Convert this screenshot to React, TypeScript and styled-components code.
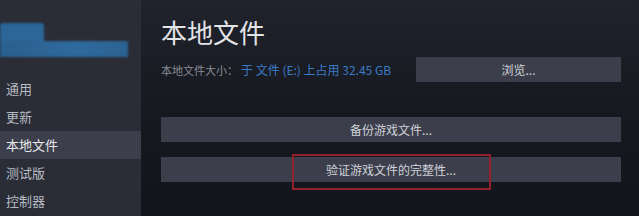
import React from "react";
import styled, { createGlobalStyle } from "styled-components";

const Global = createGlobalStyle`
  html, body { margin: 0; padding: 0; background: #1a1d24; }
  body { font-family: "Noto Sans CJK SC", "Noto Sans", sans-serif; }
`;

const Page = styled.div`
  display: flex;
  width: 639px;
  height: 216px;
  overflow: hidden;
`;

const Sidebar = styled.nav`
  width: 141px;
  flex-shrink: 0;
  background: #2a2d36;
  display: flex;
  flex-direction: column;
  padding-top: 23px;
  box-sizing: border-box;
`;

const Avatar = styled.div`
  display: flex;
  flex-direction: column;
  filter: blur(1.2px);
  margin-bottom: 18px;
`;

const AvatarTop = styled.div`
  width: 44px;
  height: 18px;
  background: #2c6597;
  border-radius: 3px 3px 0 0;
`;

const AvatarBottom = styled.div`
  width: 128px;
  height: 16px;
  background: linear-gradient(90deg, #2a5f90, #2f6a9c 60%, #2b6293);
`;

const MenuItem = styled.div<{ $active?: boolean }>`
  height: 28px;
  line-height: 28px;
  padding-left: 6px;
  font-size: 13px;
  color: ${(p) => (p.$active ? "#e6e8ec" : "#b6bac2")};
  background: ${(p) => (p.$active ? "#3c3f4b" : "transparent")};
`;

const Main = styled.main`
  flex: 1;
  background: linear-gradient(180deg, #20232b 0%, #171a21 45%, #11141a 100%);
  padding: 16px 18px 0 20px;
  display: flex;
  flex-direction: column;
`;

const Title = styled.h1`
  margin: 0;
  font-size: 26px;
  line-height: 32px;
  font-weight: 400;
  color: #e2e4e8;
`;

const SizeRow = styled.div`
  display: flex;
  align-items: center;
  margin-top: 9px;
`;

const Label = styled.span`
  font-size: 11px;
  color: #878c96;
  width: 80px;
`;

const Value = styled.span`
  font-size: 12px;
  color: #3b7bc8;
`;

const Button = styled.div<{ $width?: number }>`
  position: relative;
  height: 25px;
  line-height: 25px;
  text-align: center;
  font-size: 12px;
  color: #cfd2d8;
  background: #3c3f4b;
  box-sizing: border-box;
  ${(p) => (p.$width ? `width: ${p.$width}px; margin-left: auto;` : "width: 100%;")}
`;

const Spacer = styled.div<{ $h: number }>`
  height: ${(p) => p.$h}px;
  flex-shrink: 0;
`;

const Highlight = styled.div`
  position: absolute;
  left: 131px;
  top: -3px;
  width: 199px;
  height: 36px;
  border: 2px solid #94202e;
  box-sizing: border-box;
  pointer-events: none;
`;

export default function App() {
  const items = ["通用", "更新", "本地文件", "测试版", "控制器"];
  return (
    <>
      <Global />
      <Page>
        <Sidebar>
          <Avatar>
            <AvatarTop />
            <AvatarBottom />
          </Avatar>
          {items.map((t) => (
            <MenuItem key={t} $active={t === "本地文件"}>
              {t}
            </MenuItem>
          ))}
        </Sidebar>
        <Main>
          <Title>本地文件</Title>
          <SizeRow>
            <Label>本地文件大小：</Label>
            <Value>于 文件 (E:) 上占用 32.45 GB</Value>
            <Button $width={205}>浏览...</Button>
          </SizeRow>
          <Spacer $h={35} />
          <Button>备份游戏文件...</Button>
          <Spacer $h={15} />
          <Button>
            验证游戏文件的完整性...
            <Highlight />
          </Button>
        </Main>
      </Page>
    </>
  );
}
